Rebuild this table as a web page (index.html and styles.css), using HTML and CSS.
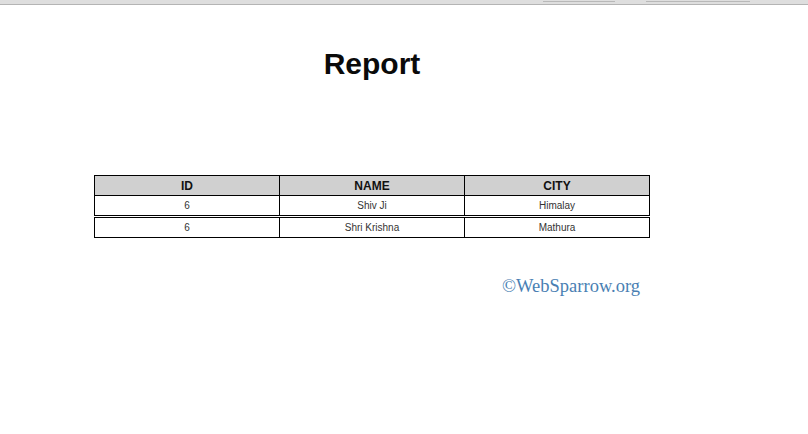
FILE: index.html
```html
<!DOCTYPE html>
<html>
<head>
<meta charset="utf-8">
<link rel="stylesheet" href="styles.css">
</head>
<body>
<div class="topbar">
  <div class="tab tab-a"></div>
  <div class="tab tab-b"></div>
</div>
<div class="page">
  <h1 class="title">Report</h1>
  <table class="report">
    <tr><th>ID</th><th>NAME</th><th>CITY</th></tr>
    <tr><td>6</td><td>Shiv Ji</td><td>Himalay</td></tr>
  </table>
  <table class="report second">
    <tr><td>6</td><td>Shri Krishna</td><td>Mathura</td></tr>
  </table>
  <div class="credit">&copy;WebSparrow.org</div>
</div>
</body>
</html>
```

FILE: styles.css
```css
html, body {
  margin: 0;
  padding: 0;
  background: #fff;
}
body {
  font-family: "Liberation Sans", Arial, sans-serif;
  color: #000;
}
.topbar {
  height: 4px;
  background: #dedede;
  border-bottom: 1px solid #b4b4b4;
  display: flex;
  align-items: flex-start;
}
.tab {
  height: 1px;
  margin-top: 1px;
  background: #b8b8b8;
}
.tab-a {
  width: 72px;
  margin-left: 543px;
}
.tab-b {
  width: 104px;
  margin-left: 31px;
}
.page {
  width: 556px;
  margin-left: 94px;
}
.title {
  margin: 42px 0 0;
  font-size: 30px;
  line-height: 34px;
  font-weight: bold;
  text-align: center;
  color: #0a0a0a;
}
.report {
  width: 556px;
  border-collapse: collapse;
  table-layout: fixed;
  border: 1px solid #000;
}
.report:first-of-type {
  margin-top: 94px;
}
.report.second {
  margin-top: 1px;
}
.report th, .report td {
  border: 1px solid #000;
  padding: 0;
  height: 19px;
  text-align: center;
  vertical-align: middle;
}
.report th {
  background: #d0d0d0;
  font-size: 12px;
  font-weight: bold;
  color: #111;
}
.report td {
  font-size: 10px;
  color: #333;
}
.credit {
  margin-top: 38px;
  padding-right: 10px;
  text-align: right;
  font-family: "Liberation Serif", "Times New Roman", serif;
  font-size: 18.5px;
  color: #4a7fb3;
}
```
